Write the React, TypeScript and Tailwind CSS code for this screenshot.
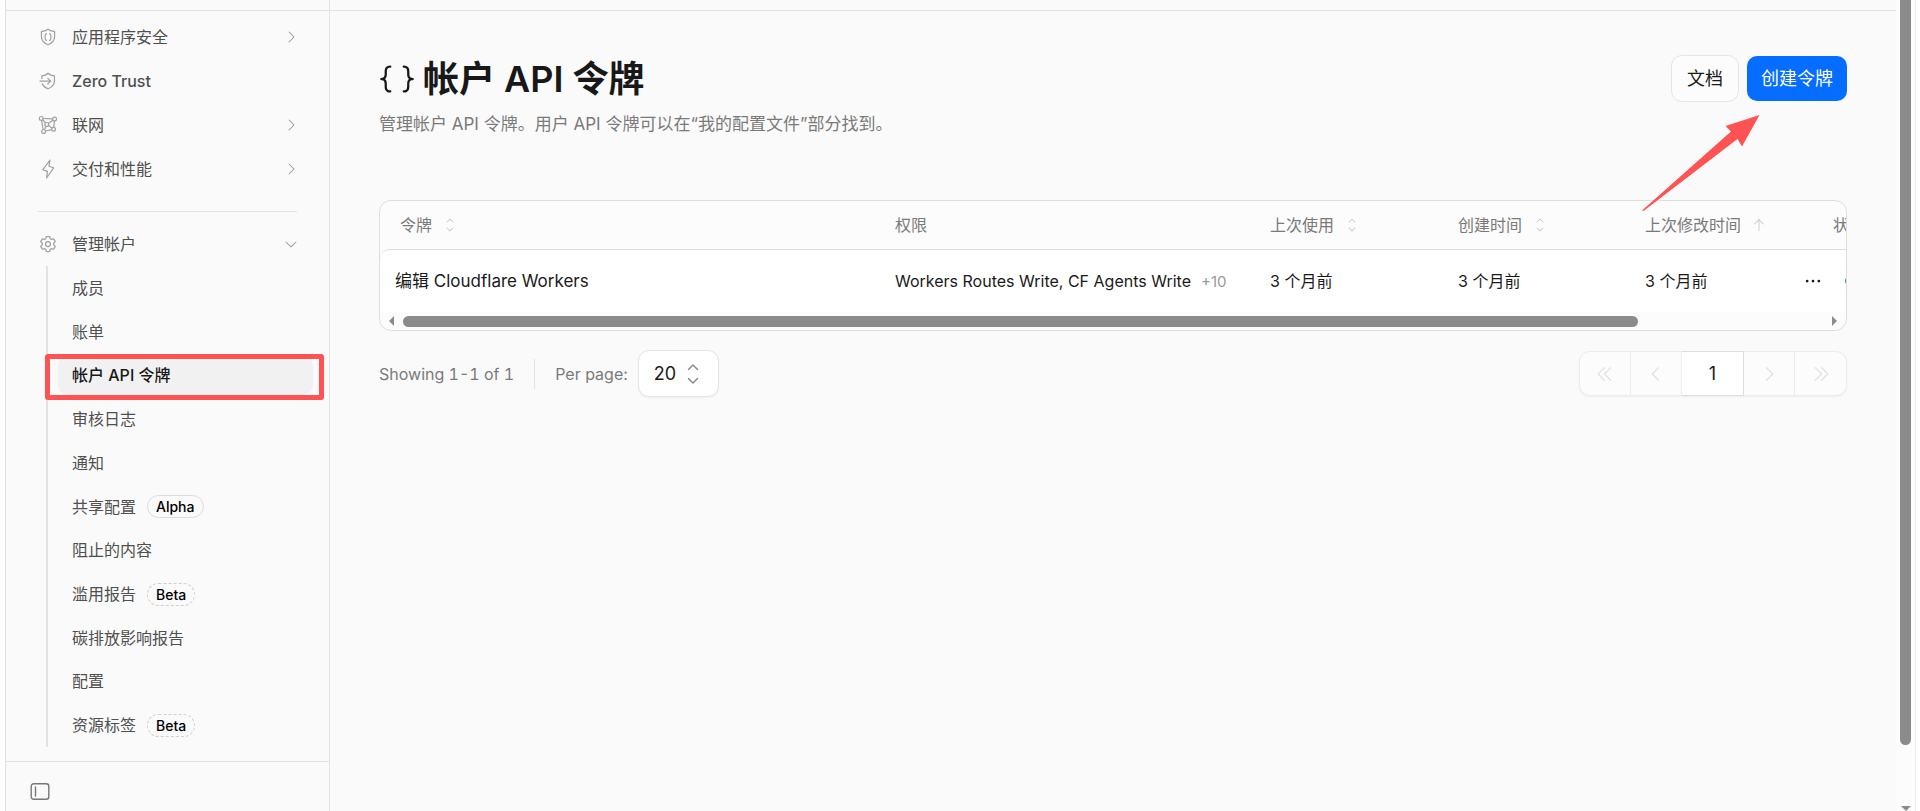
import type { ReactNode } from "react";
import clsx from "clsx";
import {
  PiArrowUp,
  PiBracketsCurly,
  PiCaretDoubleLeft,
  PiCaretDoubleRight,
  PiCaretDown,
  PiCaretLeft,
  PiCaretRight,
  PiCaretUpDown,
  PiDotsThreeBold,
} from "react-icons/pi";
import { HiOutlineCog6Tooth } from "react-icons/hi2";

const SHIELD = "M10 2.2c2 1.5 4.200 2.200 6.600 2.200v5.200c0 4-2.700 6.800-6.600 8.200-3.900-1.400-6.600-4.200-6.600-8.200V4.400c2.400 0 4.600-.7 6.600-2.200z";

function ShieldCodeIcon() {
  return (
    <svg viewBox="0 0 20 20" className="h-5 w-5" fill="none" stroke="currentColor" strokeWidth="1.2" strokeLinejoin="round" strokeLinecap="round">
      <path d={SHIELD} />
      <path d="M8.400 6.600c-2 1-.8 2.200-1.400 3.400.6 1.200-.6 2.400 1.400 3.400M11.600 6.600c2 1 .8 2.200 1.400 3.400-.6 1.200.6 2.400-1.400 3.400" />
    </svg>
  );
}

function ZeroTrustIcon() {
  return (
    <svg viewBox="0 0 20 20" className="h-5 w-5" fill="none" stroke="currentColor" strokeWidth="1.2" strokeLinejoin="round" strokeLinecap="round">
      <path d="M3.800 7.600V4.800C6.200 4.600 8.200 3.800 10 2.200c1.800 1.600 4 2.400 6.400 2.600v5c0 3.800-2.600 6.600-6.400 8-2.800-1-4.800-2.800-5.800-5" />
      <path d="M2 10.200h10.600M9.800 7.400l2.800 2.800-2.800 2.800" />
    </svg>
  );
}

function NetworkIcon() {
  return (
    <svg viewBox="0 0 20 20" className="h-5 w-5" fill="none" stroke="currentColor" strokeWidth="1.2">
      <circle cx="3.200" cy="3.400" r="1.900" />
      <circle cx="16.600" cy="4" r="1.900" />
      <circle cx="15.600" cy="14.200" r="1.900" />
      <circle cx="5.600" cy="16.400" r="1.900" />
      <circle cx="8.800" cy="9.400" r="1.900" />
      <path d="M5.100 3.500l9.600.4M16.400 5.900l-.6 6.400M13.700 14.600l-6.200 1.400M3.500 5.300l1.700 9.200M4.600 4.700l2.900 3.300M15.100 5.200l-4.800 3.100M10.500 10.400l3.500 2.600M8.200 11.200l-1.800 3.500" />
    </svg>
  );
}

function BoltIcon() {
  return (
    <svg viewBox="0 0 20 20" className="h-5 w-5" fill="none" stroke="currentColor" strokeWidth="1.2" strokeLinejoin="round">
      <path d="M12 1 4.700 10.800l4.700 1.600L8.600 19l7-10.200-4.600-1.600z" />
    </svg>
  );
}

interface NavItem {
  label: string;
  icon: ReactNode;
  expandable?: boolean;
}

const navItems: NavItem[] = [
  { label: "应用程序安全", icon: <ShieldCodeIcon />, expandable: true },
  { label: "Zero Trust", icon: <ZeroTrustIcon /> },
  { label: "联网", icon: <NetworkIcon />, expandable: true },
  { label: "交付和性能", icon: <BoltIcon />, expandable: true },
];

const accountItems: { label: string; badge?: "Alpha" | "Beta"; active?: boolean }[] = [
  { label: "成员" },
  { label: "账单" },
  { label: "帐户 API 令牌", active: true },
  { label: "审核日志" },
  { label: "通知" },
  { label: "共享配置", badge: "Alpha" },
  { label: "阻止的内容" },
  { label: "滥用报告", badge: "Beta" },
  { label: "碳排放影响报告" },
  { label: "配置" },
  { label: "资源标签", badge: "Beta" },
];

function Badge({ kind }: { kind: "Alpha" | "Beta" }) {
  return (
    <span
      className={clsx(
        "ml-[11px] rounded-full border px-2 text-sm leading-[21px] font-medium text-black",
        kind === "Beta" ? "border-dashed border-[#cfcfcf]" : "border-[#dcdcdc]"
      )}
    >
      {kind}
    </span>
  );
}

function Sidebar() {
  return (
    <aside className="flex w-[324px] shrink-0 flex-col border-r border-[#e3e3e3] text-base text-[#505050]">
      <nav className="flex flex-1 flex-col pt-1">
        <ul>
          {navItems.map((item) => (
            <li key={item.label}>
              <a href="#" className="flex h-11 items-center pr-[30px] pl-8">
                <span className="text-[#a0a0a0]">{item.icon}</span>
                <span className={clsx("ml-[14px] flex-1", item.label === "Zero Trust" && "font-medium")}>{item.label}</span>
                {item.expandable && <PiCaretRight className="h-4 w-4 text-[#999]" />}
              </a>
            </li>
          ))}
        </ul>

        <hr className="mt-5 mr-8 mb-[10px] ml-8 border-[#e3e3e3]" />

        <button type="button" className="flex h-11 items-center pr-[30px] pl-8 text-left">
          <HiOutlineCog6Tooth className="h-5 w-5 text-[#a0a0a0]" />
          <span className="ml-[14px] flex-1">管理帐户</span>
          <PiCaretDown className="h-4 w-4 text-[#999]" />
        </button>

        <ul className="mb-[14px] ml-10 flex flex-1 flex-col border-l-2 border-[#e3e3e3]">
          {accountItems.map((item) => (
            <li key={item.label} className="relative flex flex-1 items-center">
              <a
                href="#"
                className={clsx(
                  "mr-4 ml-[10px] flex h-10 flex-1 items-center rounded-[10px] pl-[14px]",
                  item.active && "bg-[#f1f1f1] font-medium text-[#181818]"
                )}
              >
                {item.label}
                {item.badge && <Badge kind={item.badge} />}
              </a>
              {item.active && (
                <span className="pointer-events-none absolute top-px right-[5px] -bottom-[3px] -left-[3px] rounded-[3px] border-[5px] border-[#ff5252]" />
              )}
            </li>
          ))}
        </ul>
      </nav>

      <div className="h-[50px] border-t border-[#e3e3e3] px-6 pt-5">
        <button type="button" aria-label="Toggle sidebar" className="block text-[#777]">
          <svg viewBox="0 0 20 20" className="h-5 w-5" fill="none" stroke="currentColor" strokeWidth="1.400" strokeLinecap="round">
            <rect x="1.200" y="1.700" width="17.600" height="15.600" rx="2.500" />
            <path d="M5.500 5v9" />
          </svg>
        </button>
      </div>
    </aside>
  );
}

function SortHeader({ label, ascending }: { label: string; ascending?: boolean }) {
  return (
    <button type="button" className="flex items-center gap-[10px]">
      {label}
      {ascending ? <PiArrowUp className="h-4 w-4 text-[#ccc]" /> : <PiCaretUpDown className="h-4 w-4 text-[#ccc]" />}
    </button>
  );
}

function TokenTable() {
  return (
    <div className="mt-[62px] overflow-hidden rounded-[12px] border border-[#dedede] bg-[#fcfcfc]">
      <div className="overflow-hidden">
        <table className="w-[1700px] table-fixed border-separate border-spacing-0 text-left">
          <colgroup>
            <col />
            <col className="w-[375px]" />
            <col className="w-[188px]" />
            <col className="w-[187px]" />
            <col className="w-[188px]" />
            <col className="w-[262px]" />
          </colgroup>
          <thead className="text-base text-[#7a7a7a]">
            <tr className="h-12">
              <th className="pl-5 font-normal"><SortHeader label="令牌" /></th>
              <th className="pl-[15px] font-normal">权限</th>
              <th className="pl-[15px] font-normal"><SortHeader label="上次使用" /></th>
              <th className="pl-[15px] font-normal"><SortHeader label="创建时间" /></th>
              <th className="pl-[15px] font-normal"><SortHeader label="上次修改时间" ascending /></th>
              <th className="pl-[15px] font-normal">状态</th>
            </tr>
          </thead>
          <tbody className="text-base text-[#1a1a1a]">
            <tr className="h-[63px] [&>td]:border-t [&>td]:border-[#dedede] [&>td]:bg-white">
              <td className="rounded-tl-[10px] pt-[2px] pl-[15px] text-[17px]">编辑 Cloudflare Workers</td>
              <td className="pl-[15px] whitespace-nowrap">
                Workers Routes Write, CF Agents Write
                <span className="ml-[10px] text-[15px] text-[#9a9a9a]">+10</span>
              </td>
              <td className="pl-[15px]">3 个月前</td>
              <td className="pl-[15px]">3 个月前</td>
              <td className="pl-[15px]">
                <div className="flex items-center justify-between">
                  3 个月前
                  <button type="button" aria-label="更多操作" className="-mr-[6px]">
                    <PiDotsThreeBold className="h-[22px] w-[22px]" />
                  </button>
                </div>
              </td>
              <td className="pl-[27px]">
                <span className="block h-2 w-2 rounded-full bg-[#20b860]" />
              </td>
            </tr>
          </tbody>
        </table>
      </div>

      <div className="flex h-[18px] items-center gap-[9px] px-[9px]">
        <span className="border-y-[5px] border-r-[5px] border-y-transparent border-r-[#8b8b8b]" />
        <div className="flex-1">
          <div className="h-[11px] w-[87%] rounded-full bg-[#8b8b8b]" />
        </div>
        <span className="border-y-[5px] border-l-[5px] border-y-transparent border-l-[#8b8b8b]" />
      </div>
    </div>
  );
}

function Pagination() {
  return (
    <div className="mt-[19px] flex items-center text-base text-[#7a7a7a]">
      <span className="tabular-nums">Showing 1-1 of 1</span>
      <span className="mr-5 ml-5 h-[30px] w-px bg-[#e3e3e3]" />
      <label htmlFor="per-page">Per page:</label>
      <div className="relative ml-[10px]">
        <select
          id="per-page"
          defaultValue="20"
          className="h-[47px] w-[81px] appearance-none rounded-[11px] border border-[#e5e5e5] bg-white pl-[15px] text-[18px] text-[#1a1a1a] shadow-xs"
        >
          <option>20</option>
          <option>50</option>
        </select>
        <PiCaretUpDown className="pointer-events-none absolute top-3 right-[14px] h-6 w-6 text-[#8a8a8a]" />
      </div>

      <div className="ml-auto flex h-[45px] divide-x divide-[#ececec] rounded-[11px] border border-[#ececec] bg-[#fcfcfc] text-[#e2e2e2] shadow-xs">
        <button type="button" disabled aria-label="First page" className="grid w-[51px] place-items-center">
          <PiCaretDoubleLeft className="h-5 w-5" />
        </button>
        <button type="button" disabled aria-label="Previous page" className="grid w-[51px] place-items-center">
          <PiCaretLeft className="h-5 w-5" />
        </button>
        <input
          aria-label="Page"
          defaultValue="1"
          className="-my-px w-[62px] border-y border-[#dedede] bg-white text-center text-[18px] text-[#1a1a1a]"
        />
        <button type="button" disabled aria-label="Next page" className="grid w-[51px] place-items-center">
          <PiCaretRight className="h-5 w-5" />
        </button>
        <button type="button" disabled aria-label="Last page" className="grid w-[51px] place-items-center">
          <PiCaretDoubleRight className="h-5 w-5" />
        </button>
      </div>
    </div>
  );
}

export default function App() {
  return (
    <div className="flex h-screen overflow-hidden bg-white pr-1 pl-[5px] font-['Inter','Noto_Sans_CJK_SC',sans-serif]">
      <div className="flex min-w-0 flex-1 flex-col border-l border-[#e0e0e0] bg-[#fafafa]">
        <div className="h-[11px] shrink-0 border-b border-[#e3e3e3]">
          <div className="h-full w-[324px] border-r border-[#e3e3e3]" />
        </div>
        <div className="flex min-h-0 flex-1">
          <Sidebar />
          <main className="min-w-0 flex-1 px-[49px] pt-11">
            <div className="flex items-start justify-between">
              <div>
                <h1 className="flex items-center gap-2 text-[36px] leading-[48px] font-semibold text-[#181818]">
                  <PiBracketsCurly className="h-9 w-9" />
                  帐户 API 令牌
                </h1>
                <p className="mt-[7px] text-[17px] leading-7 text-[#7a7a7a]">
                  管理帐户 API 令牌。用户 API 令牌可以在“我的配置文件”部分找到。
                </p>
              </div>

              <div className="flex items-center gap-2 text-[18px]">
                <a
                  href="#"
                  className="flex h-[47px] items-center rounded-[11px] border border-[#e5e5e5] bg-[#fcfcfc] px-[15px] text-[#1a1a1a]"
                >
                  文档
                </a>
                <div className="relative">
                  <button type="button" className="h-[45px] rounded-[10px] bg-[#056dff] px-[14px] text-white">
                    创建令牌
                  </button>
                  <svg
                    viewBox="0 0 120 98"
                    className="pointer-events-none absolute top-[58px] right-[86px] h-[98px] w-[120px]"
                    fill="#ff5252"
                  >
                    <path d="M1 96.500 90 17.500 84.500 12 118.500 1 101 32.500 96.500 25 2.500 97z" />
                  </svg>
                </div>
              </div>
            </div>

            <TokenTable />
            <Pagination />
          </main>
        </div>
      </div>

      <div className="flex w-5 shrink-0 flex-col items-center border-r border-[#ececec] bg-[#fcfcfc]">
        <div className="w-[11px] flex-1 rounded-b-full bg-[#8b8b8b]" />
        <span className="mt-[61px] border-x-[5px] border-t-[5px] border-x-transparent border-t-[#8b8b8b]" />
      </div>
    </div>
  );
}
